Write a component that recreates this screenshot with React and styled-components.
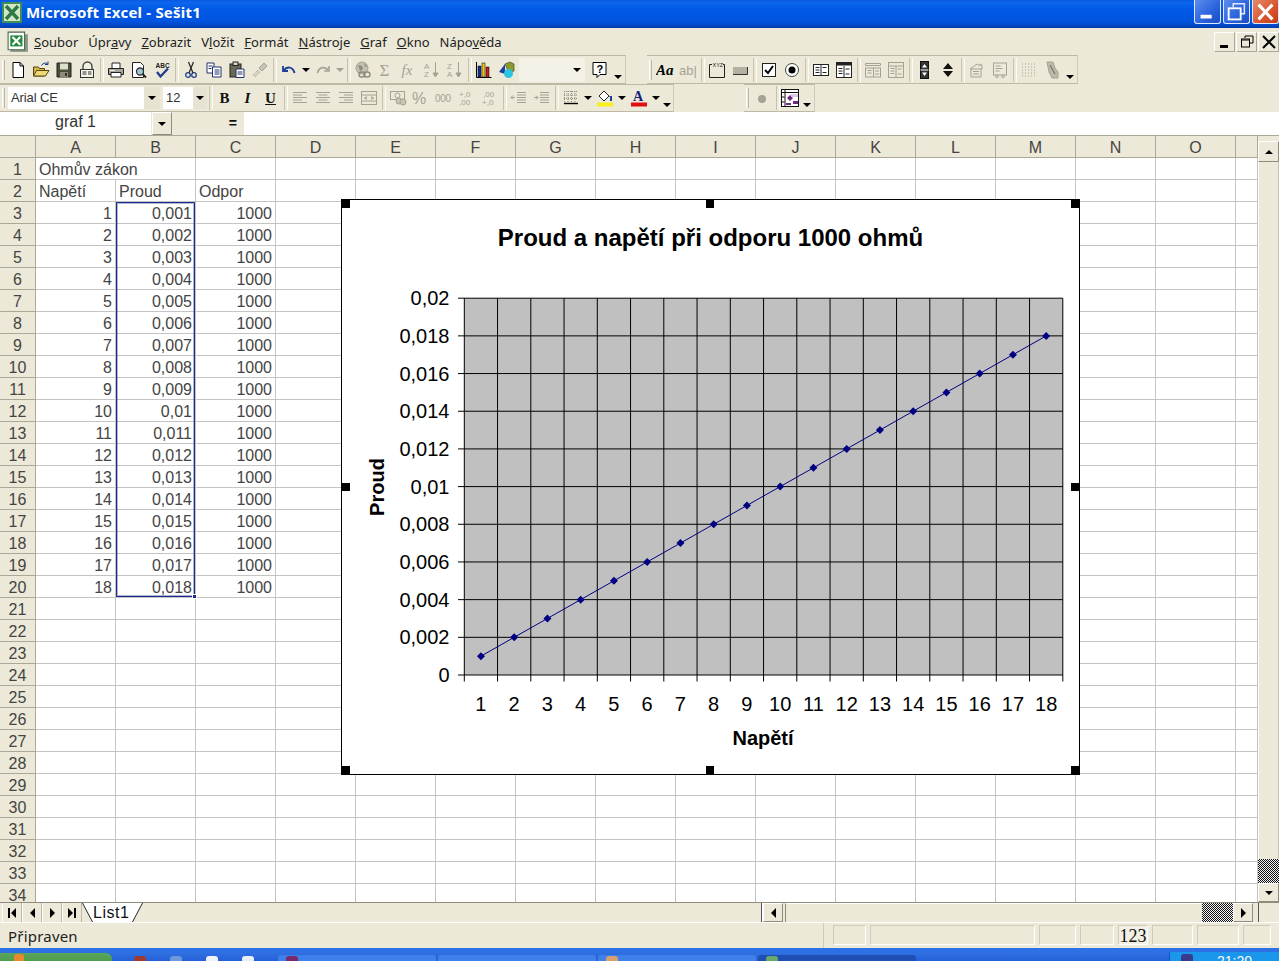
import React from 'react';
import styled, { createGlobalStyle } from 'styled-components';

const GlobalStyle = createGlobalStyle`
  html, body {
    margin: 0;
    padding: 0;
    background: #ece9d8;
    overflow: hidden;
  }
  * {
    box-sizing: border-box;
  }
`;

const FACE = '#ece9d8';
const EDGE = '#aca899';
const OFF = '#a5a293';
const CHECKER = 'repeating-conic-gradient(#111 0 25%, #f4f4f4 0 50%) 0 0 / 2px 2px';

const Glyph = ({ children }) => (
  <svg width="18" height="18" viewBox="0 0 18 18">
    {children}
  </svg>
);

// toolbar pictures, drawn by hand on an 18px square
const ICONS = {
  new: (
    <Glyph>
      <path d="M4 1.5h7l3.5 3.5v11.5H4z" fill="#fff" stroke="#000" />
      <path d="M11 1.5V5h3.5" fill="none" stroke="#000" />
    </Glyph>
  ),
  open: (
    <Glyph>
      <path d="M1.5 15V6h5l1 1.5h5V15z" fill="#d8b648" stroke="#54460f" />
      <path d="M1.5 15l3-5.5h12.5L13.5 15z" fill="#f0d878" stroke="#54460f" />
      <path d="M9.5 4.5C11 2 13 1.5 15.5 2.5M16 .5v3h-3" fill="none" stroke="#1a3a8a" />
    </Glyph>
  ),
  save: (
    <Glyph>
      <path d="M2 2h14v14H2z" fill="#4a4d38" stroke="#222" />
      <rect x="5" y="2.5" width="8" height="6" fill="#dedecc" />
      <rect x="5" y="11" width="8" height="5" fill="#8c8c74" />
      <rect x="10" y="12" width="2" height="3" fill="#333" />
    </Glyph>
  ),
  perm: (
    <Glyph>
      <path d="M5 9V5.5a4.5 4.5 0 019 0V9" fill="#f0efe4" stroke="#444" strokeWidth="1.4" />
      <rect x="2.5" y="8.5" width="13" height="8" fill="#f6f5ea" stroke="#333" />
      <path d="M4.5 11h4M4.5 13h4M10 11h3.5M10 13h3.5" stroke="#333" />
    </Glyph>
  ),
  print: (
    <Glyph>
      <path d="M5 7V2h8v5" fill="#fff" stroke="#222" />
      <path d="M1.5 7.5h15v6h-15z" fill="#a6a69c" stroke="#222" />
      <path d="M4 11.5h10v4.5H4z" fill="#fff" stroke="#222" />
      <path d="M3 9.5h5" stroke="#eee" />
    </Glyph>
  ),
  preview: (
    <Glyph>
      <path d="M2.5 1.5h8l3 3v12h-11z" fill="#fff" stroke="#222" />
      <circle cx="10" cy="10.5" r="3.5" fill="#9cc8d8" stroke="#333" strokeWidth="1.3" />
      <path d="M12.5 13l3.5 3.5" stroke="#222" strokeWidth="2" />
    </Glyph>
  ),
  spell: (
    <Glyph>
      <text x="2.5" y="6.5" fontFamily="Liberation Sans" fontSize="6.5" fontWeight="700" fill="#222">
        ABC
      </text>
      <path d="M4 11l3.5 4.5L15 7.5" fill="none" stroke="#24408e" strokeWidth="2.4" />
    </Glyph>
  ),
  cut: (
    <Glyph>
      <circle cx="6" cy="14" r="2.3" fill="none" stroke="#24408e" strokeWidth="1.3" />
      <circle cx="12" cy="14" r="2.3" fill="none" stroke="#24408e" strokeWidth="1.3" />
      <path d="M7 12L11.5 1M11 12L6.5 1" stroke="#222" strokeWidth="1.2" />
    </Glyph>
  ),
  copy: (
    <Glyph>
      <path d="M2 2h7v10H2z" fill="#fff" stroke="#24306e" />
      <path d="M7.5 6h8.5v10H7.5z" fill="#fff" stroke="#24306e" />
      <path d="M3.5 5h4M3.5 7.5h3M9.5 9h5M9.5 11h5M9.5 13h5" stroke="#24306e" />
    </Glyph>
  ),
  paste: (
    <Glyph>
      <rect x="2" y="3" width="11" height="13" fill="#6a6a52" stroke="#222" />
      <rect x="5" y="1" width="5" height="3.5" fill="#d8d8c8" stroke="#222" />
      <path d="M8 8h8v8.5H8z" fill="#fff" stroke="#24306e" />
      <path d="M9.5 11h5M9.5 13h5" stroke="#24306e" />
    </Glyph>
  ),
  painter: (
    <Glyph>
      <path d="M8 7l5-5 3 3-5 5z" fill="#c8c5b4" stroke={OFF} />
      <path d="M9 11L4 16 2 14l5-5z" fill="#d6d3c2" stroke={OFF} strokeDasharray="1 1" />
    </Glyph>
  ),
  undo: (
    <Glyph>
      <path d="M3 5v5h5" fill="none" stroke="#1d3f9a" strokeWidth="1.8" />
      <path d="M3.5 9.5C7 5 13 5.5 14.5 12" fill="none" stroke="#1d3f9a" strokeWidth="2" />
    </Glyph>
  ),
  redo: (
    <Glyph>
      <path d="M15 5v5h-5" fill="none" stroke={OFF} strokeWidth="1.6" />
      <path d="M14.5 9.5C11 5 5 5.5 3.5 12" fill="none" stroke={OFF} strokeWidth="1.8" />
    </Glyph>
  ),
  link: (
    <Glyph>
      <circle cx="8" cy="7" r="6" fill="#c4c1b0" stroke={OFF} />
      <path d="M4 4l4 1 1 3-3 2zM10 2l3 3-2 1z" fill="#8e8b7c" />
      <rect x="5" y="11" width="6" height="5" rx="2.5" fill="none" stroke="#8e8b7c" strokeWidth="1.4" />
      <rect x="10" y="11" width="6" height="5" rx="2.5" fill="none" stroke="#8e8b7c" strokeWidth="1.4" />
    </Glyph>
  ),
  sum: (
    <Glyph>
      <text x="2.5" y="15" fontFamily="Liberation Serif" fontSize="17" fill={OFF}>
        Σ
      </text>
    </Glyph>
  ),
  fx: (
    <Glyph>
      <text x="1.5" y="14" fontFamily="Liberation Serif" fontStyle="italic" fontSize="15" fill={OFF}>
        fx
      </text>
    </Glyph>
  ),
  az: (
    <Glyph>
      <text x="1" y="8" fontFamily="Liberation Sans" fontSize="8" fill={OFF}>
        A
      </text>
      <text x="1" y="16" fontFamily="Liberation Sans" fontSize="8" fill={OFF}>
        Z
      </text>
      <path d="M12.5 1v13M10 12l2.5 4 2.5-4z" fill={OFF} stroke={OFF} />
    </Glyph>
  ),
  za: (
    <Glyph>
      <text x="1" y="8" fontFamily="Liberation Sans" fontSize="8" fill={OFF}>
        Z
      </text>
      <text x="1" y="16" fontFamily="Liberation Sans" fontSize="8" fill={OFF}>
        A
      </text>
      <path d="M12.5 1v13M10 12l2.5 4 2.5-4z" fill={OFF} stroke={OFF} />
    </Glyph>
  ),
  chart: (
    <Glyph>
      <path d="M1.5 1v15.5h15" fill="none" stroke="#000" />
      <rect x="3" y="5" width="3" height="11" fill="#1d2f8a" stroke="#000" strokeWidth=".5" />
      <rect x="7" y="2" width="3" height="14" fill="#e8c820" stroke="#000" strokeWidth=".5" />
      <rect x="11" y="6" width="3" height="10" fill="#c81c1c" stroke="#000" strokeWidth=".5" />
    </Glyph>
  ),
  draw: (
    <Glyph>
      <path d="M7 3l5-2 4 2v7l-5 2z" fill="#8c9a28" stroke="#333" strokeWidth=".6" />
      <path d="M1 11l6-8v10z" fill="#1d3f9a" />
      <circle cx="10.5" cy="12.5" r="4.5" fill="#2ac4e0" />
    </Glyph>
  ),
  help: (
    <Glyph>
      <path d="M2 1.5h13v12H9l-3 3v-3H2z" fill="#fff" stroke="#000" />
      <text x="5.5" y="11.5" fontFamily="Liberation Sans" fontSize="11" fontWeight="700" fill="#000">
        ?
      </text>
    </Glyph>
  ),
  aa: (
    <Glyph>
      <text x="0" y="14" fontFamily="Liberation Serif" fontStyle="italic" fontWeight="700" fontSize="15" fill="#000">
        Aa
      </text>
    </Glyph>
  ),
  ab: (
    <Glyph>
      <text x="0" y="14" fontFamily="Liberation Sans" fontSize="13" fill={OFF}>
        ab|
      </text>
    </Glyph>
  ),
  group: (
    <Glyph>
      <path d="M4 3.5H1.5v13h15v-13H15" fill="none" stroke="#222" />
      <text x="4.5" y="6" fontFamily="Liberation Sans" fontSize="5.5" fill="#222">
        XYZ
      </text>
    </Glyph>
  ),
  button: (
    <Glyph>
      <rect x="2" y="6" width="14" height="7" fill="#b4b1a2" />
      <path d="M2 13.5h14.5V6" fill="none" stroke="#333" />
    </Glyph>
  ),
  check: (
    <Glyph>
      <rect x="2.5" y="2.5" width="13" height="13" fill="#fff" stroke="#222" />
      <path d="M5 9l3 3 5-7" fill="none" stroke="#000" strokeWidth="2" />
    </Glyph>
  ),
  radio: (
    <Glyph>
      <circle cx="9" cy="9" r="6.5" fill="#fff" stroke="#444" />
      <circle cx="9" cy="9" r="3.5" fill="#000" />
    </Glyph>
  ),
  list: (
    <Glyph>
      <rect x="1.5" y="3.5" width="15" height="11" fill="#fff" stroke="#222" />
      <path d="M3.5 6.5h4M3.5 9h4M3.5 11.5h4M9 3.5v11M10.5 6.5h4M10.5 11.5h4" stroke="#222" />
    </Glyph>
  ),
  combo: (
    <Glyph>
      <rect x="1.5" y="1.5" width="15" height="15" fill="#fff" stroke="#222" />
      <rect x="1.5" y="1.5" width="15" height="3" fill="#222" />
      <path d="M3.5 7.5h4M3.5 10h4M3.5 12.5h4M9 5v11M10.5 8h4M10.5 13h4" stroke="#222" />
    </Glyph>
  ),
  listOff: (
    <Glyph>
      <path d="M1.5 2.5h15v2h-15z" fill="none" stroke={OFF} />
      <rect x="1.5" y="7" width="15" height="9" fill="none" stroke={OFF} />
      <path d="M3.5 9.5h4M3.5 12h4M9.5 7v9M11 10h4M11 13h4" stroke={OFF} />
    </Glyph>
  ),
  comboOff: (
    <Glyph>
      <rect x="1.5" y="1.5" width="15" height="15" fill="none" stroke={OFF} />
      <path d="M1.5 5h15M3.5 7.5h4M3.5 10h4M3.5 12.5h4M9 5v11M10.5 8h4M10.5 13h4" stroke={OFF} />
    </Glyph>
  ),
  spin: (
    <Glyph>
      <rect x="4.5" y=".5" width="8" height="17" fill="#333" stroke="#111" />
      <path d="M8.5 3L6 6.5h5zM8.5 15L6 11.5h5z" fill="#fff" />
      <path d="M4.5 9h8" stroke="#fff" />
    </Glyph>
  ),
  scroll: (
    <Glyph>
      <path d="M9 2L4 8h10zM9 16l-5-6h10z" fill="#111" />
    </Glyph>
  ),
  props: (
    <Glyph>
      <path d="M2 8l7-5 3 2V3l2 1v4H2zM3 8v8h10V8" fill="none" stroke={OFF} />
      <path d="M5 10.5h6M5 13h6" stroke={OFF} />
    </Glyph>
  ),
  code: (
    <Glyph>
      <rect x="2.5" y="2" width="13" height="12" fill="none" stroke={OFF} />
      <path d="M4.5 5h5M4.5 7.5h7M4.5 10h4" stroke={OFF} />
      <circle cx="6" cy="15.5" r="1.3" fill="none" stroke={OFF} />
      <circle cx="12" cy="15.5" r="1.3" fill="none" stroke={OFF} />
    </Glyph>
  ),
  dots: (
    <Glyph>
      <path d="M2 3h14M2 6h14M2 9h14M2 12h14M2 15h14" stroke={OFF} strokeDasharray="1 2" />
    </Glyph>
  ),
  pin: (
    <Glyph>
      <path d="M4 1h6l2 6 3 4v6H9l-3-6z" fill="#bdbaa9" stroke={OFF} />
      <path d="M7 4l5 9" stroke="#7d7a6c" strokeWidth="1.4" />
    </Glyph>
  ),
  alignLeft: (
    <Glyph>
      <path d="M2 3.5h14M2 6h9M2 8.5h14M2 11h9M2 13.5h14" stroke={OFF} />
    </Glyph>
  ),
  alignCenter: (
    <Glyph>
      <path d="M2 3.5h14M4.5 6h9M2 8.5h14M4.5 11h9M2 13.5h14" stroke={OFF} />
    </Glyph>
  ),
  alignRight: (
    <Glyph>
      <path d="M2 3.5h14M7 6h9M2 8.5h14M7 11h9M2 13.5h14" stroke={OFF} />
    </Glyph>
  ),
  merge: (
    <Glyph>
      <rect x="1.5" y="2.5" width="15" height="13" fill="none" stroke={OFF} />
      <path d="M1.5 6h15M1.5 12h15M4 9h3M11 9h3M7 7.5L5 9l2 1.5M11 7.5l2 1.5-2 1.5" fill="none" stroke={OFF} />
    </Glyph>
  ),
  money: (
    <Glyph>
      <rect x="1.5" y="2.5" width="14" height="8" fill="none" stroke={OFF} />
      <circle cx="8.5" cy="6.5" r="2.5" fill="none" stroke={OFF} />
      <circle cx="10" cy="12" r="3" fill="#c9c6b5" stroke={OFF} />
      <circle cx="14" cy="13" r="3" fill="#c9c6b5" stroke={OFF} />
    </Glyph>
  ),
  percent: (
    <Glyph>
      <text x="0" y="15" fontFamily="Liberation Sans" fontSize="16" fill={OFF}>
        %
      </text>
    </Glyph>
  ),
  thousand: (
    <Glyph>
      <text x="0" y="13" fontFamily="Liberation Sans" fontSize="10" fill={OFF} letterSpacing="-.3">
        000
      </text>
    </Glyph>
  ),
  decMore: (
    <Glyph>
      <text x="1" y="8" fontFamily="Liberation Sans" fontSize="8" fill={OFF}>
        +,0
      </text>
      <text x="1" y="16" fontFamily="Liberation Sans" fontSize="8" fill={OFF}>
        ,00
      </text>
    </Glyph>
  ),
  decLess: (
    <Glyph>
      <text x="2" y="8" fontFamily="Liberation Sans" fontSize="8" fill={OFF}>
        ,00
      </text>
      <text x="1" y="16" fontFamily="Liberation Sans" fontSize="8" fill={OFF}>
        +,0
      </text>
    </Glyph>
  ),
  outdent: (
    <Glyph>
      <path d="M7 3.5h9M7 6h9M7 8.5h9M7 11h9M7 13.5h9M1 8.5h4M3 6.5l-2 2 2 2" fill="none" stroke={OFF} />
    </Glyph>
  ),
  indent: (
    <Glyph>
      <path d="M7 3.5h9M7 6h9M7 8.5h9M7 11h9M7 13.5h9M1 8.5h4M3 6.5l2 2-2 2" fill="none" stroke={OFF} />
    </Glyph>
  ),
  borders: (
    <Glyph>
      <path d="M2 2.5h14M2 6h14M2 9.5h14M2.5 2v11M6 2v11M9.5 2v11M13 2v11" stroke="#8e8b7c" strokeDasharray="1 1" />
      <path d="M2 14.5h14" stroke="#000" strokeWidth="1.4" />
    </Glyph>
  ),
  fill: (
    <Glyph>
      <path d="M3 7l5-5 5 5-5 5z" fill="#fff" stroke="#222" />
      <path d="M8 2l5 5h3v5h-2V8" fill="#1d3f9a" />
      <rect x="1" y="13.5" width="16" height="4" fill="#f7f01a" />
    </Glyph>
  ),
  color: (
    <Glyph>
      <text x="3" y="12" fontFamily="Liberation Serif" fontWeight="700" fontSize="14" fill="#10207a">
        A
      </text>
      <rect x="1" y="13.5" width="16" height="4" fill="#e01010" />
    </Glyph>
  ),
  dot: (
    <Glyph>
      <circle cx="9" cy="10" r="4" fill="#a5a293" />
    </Glyph>
  ),
  table: (
    <Glyph>
      <rect x=".5" y=".5" width="17" height="17" fill="#fff" stroke="#111" />
      <path d="M.5 3.5h17M4 .5v17M.5 8h3M.5 13h3" stroke="#111" />
      <path d="M6 9l3-3 3 3-3 3zM12 12h5v3h-5zM5 14h5v2H5z" fill="#6a2a80" />
      <rect x="10" y="5" width="7" height="3" fill="#dcc8e8" />
    </Glyph>
  ),
};

const MAIN_TOOLS = [
  'new', 'open', 'save', 'perm', '|', 'print', 'preview', 'spell', '|', 'cut', 'copy', 'paste', 'painter', '|',
  'undo', 'v', 'redo', 'vOff', '|', 'link', 'sum', 'fx', 'az', 'za', '|', 'chart', 'draw',
];
const FORMS_TOOLS = [
  'aa', 'ab', '|', 'group', 'button', '|', 'check', 'radio', '|', 'list', 'combo', '|', 'listOff', 'comboOff', '|',
  'spin', 'scroll', '|', 'props', 'code', '|', 'dots', 'pin',
];
const FORMAT_TOOLS = [
  '|', 'B', 'I', 'U', '|', 'alignLeft', 'alignCenter', 'alignRight', 'merge', '|', 'money', 'percent', 'thousand',
  'decMore', 'decLess', '|', 'outdent', 'indent', '|', 'borders', 'v', 'fill', 'v', 'color', 'v',
];

const COLUMNS = 'ABCDEFGHIJKLMNO'.split('');
const ROW_COUNT = 34;

const sheetCell = (row, col) => {
  if (row === 1 && col === 0) return { text: 'Ohmův zákon' };
  if (row === 2) return { text: ['Napětí', 'Proud', 'Odpor'][col] };
  if (row >= 3 && row <= 20) {
    if (col === 0) return { text: row - 2, right: true };
    if (col === 1) {
      const value = String((row - 2) / 1000).replace('.', ',');
      return { text: value, right: true };
    }
    if (col === 2) return { text: 1000, right: true };
  }
  return { text: '' };
};

const PLOT = { left: 464.3, right: 1062.8, top: 298.2, bottom: 675 };
const STEP_X = (PLOT.right - PLOT.left) / 18;
const STEP_Y = (PLOT.bottom - PLOT.top) / 10;
const Y_LABELS = ['0', '0,002', '0,004', '0,006', '0,008', '0,01', '0,012', '0,014', '0,016', '0,018', '0,02'];
const POINTS = Array.from({ length: 18 }, (_, i) => ({
  x: PLOT.left + STEP_X * (i + 0.5),
  y: PLOT.bottom - STEP_Y * (i + 1) * 0.5,
}));

function ChartDrawing() {
  return (
    <svg width="737" height="574" viewBox="342 200 737 574">
      <text x="710.5" y="246" textAnchor="middle" fontFamily="Liberation Sans" fontWeight="700" fontSize="24" fill="#000">
        Proud a napětí při odporu 1000 ohmů
      </text>
      <rect x={PLOT.left} y={PLOT.top} width={PLOT.right - PLOT.left} height={PLOT.bottom - PLOT.top} fill="#c0c0c0" />
      {Y_LABELS.map((label, i) => {
        const y = PLOT.bottom - STEP_Y * i;
        return (
          <g key={label}>
            <line x1="458" x2={PLOT.right} y1={y} y2={y} stroke="#000" />
            <text x="449.5" y={y + 7} textAnchor="end" fontFamily="Liberation Sans" fontSize="20" fill="#000">
              {label}
            </text>
          </g>
        );
      })}
      {Array.from({ length: 19 }, (_, i) => {
        const x = PLOT.left + STEP_X * i;
        return <line key={i} x1={x} x2={x} y1={PLOT.top} y2="681.5" stroke="#000" />;
      })}
      {POINTS.map((p, i) => (
        <text key={i} x={p.x} y="711" textAnchor="middle" fontFamily="Liberation Sans" fontSize="20" fill="#000">
          {i + 1}
        </text>
      ))}
      <polyline points={POINTS.map((p) => `${p.x},${p.y}`).join(' ')} fill="none" stroke="#000080" />
      {POINTS.map((p, i) => (
        <path key={i} d={`M${p.x - 4} ${p.y}L${p.x} ${p.y - 4}L${p.x + 4} ${p.y}L${p.x} ${p.y + 4}z`} fill="#000080" />
      ))}
      <text x="763" y="745" textAnchor="middle" fontFamily="Liberation Sans" fontWeight="700" fontSize="20" fill="#000">
        Napětí
      </text>
      <text
        x="384"
        y="487"
        transform="rotate(-90 384 487)"
        textAnchor="middle"
        fontFamily="Liberation Sans"
        fontWeight="700"
        fontSize="20"
        fill="#000"
      >
        Proud
      </text>
    </svg>
  );
}

function ToolItem({ id }) {
  if (id === '|') return <Sep />;
  if (id === 'v') return <Drop $w={11}><DownArrow /></Drop>;
  if (id === 'vOff') return <Drop $w={11}><DownArrow $off /></Drop>;
  if (id === 'B') return <Tool><Letter>B</Letter></Tool>;
  if (id === 'I') return <Tool><Letter $italic>I</Letter></Tool>;
  if (id === 'U') return <Tool><Letter $under>U</Letter></Tool>;
  return <Tool>{ICONS[id]}</Tool>;
}

function ExcelIcon({ size }) {
  return (
    <svg width={size} height={size} viewBox="0 0 20 20">
      <rect x="3" y="3" width="16" height="16" fill="#8a9a88" />
      <path d="M1 1h15v16H1z" fill="#fff" stroke="#4c6a4c" />
      <rect x="3" y="4" width="11" height="10" fill="#1f8a3a" />
      <path d="M5 5.5l7 7M12 5.5l-7 7" stroke="#fff" strokeWidth="2" />
    </svg>
  );
}

export default function App() {
  return (
    <>
      <GlobalStyle />
      <Screen>
        <TitleBar>
          <TitleIcon>
            <svg width="20" height="21" viewBox="0 0 20 21">
              <rect width="20" height="21" fill="#3f8f55" />
              <rect x="2" y="2" width="16" height="17" fill="#d4e6c8" />
              <path d="M4 4l12 13M16 4L4 17" stroke="#2f7a44" strokeWidth="3.4" />
            </svg>
          </TitleIcon>
          <TitleText>Microsoft Excel - Sešit1</TitleText>
          <WinButtons>
            <WinButton>
              <svg width="27" height="24" viewBox="0 0 27 24">
                <rect x="6" y="15" width="12" height="4" fill="#fff" />
              </svg>
            </WinButton>
            <WinButton>
              <svg width="27" height="24" viewBox="0 0 27 24">
                <path d="M10 7V3h12v11h-4" fill="none" stroke="#dfe9fb" strokeWidth="1.6" />
                <rect x="5" y="8" width="13" height="12" fill="none" stroke="#fff" strokeWidth="2" />
              </svg>
            </WinButton>
            <WinButton $close>
              <svg width="27" height="24" viewBox="0 0 27 24">
                <path d="M6 4l15 16M21 4L6 20" stroke="#fff" strokeWidth="3.4" />
              </svg>
            </WinButton>
          </WinButtons>
        </TitleBar>

        <MenuBar>
          <MenuIcon><ExcelIcon size={22} /></MenuIcon>
          <MenuItem><u>S</u>oubor</MenuItem>
          <MenuItem>Úpr<u>a</u>vy</MenuItem>
          <MenuItem><u>Z</u>obrazit</MenuItem>
          <MenuItem>V<u>l</u>ožit</MenuItem>
          <MenuItem><u>F</u>ormát</MenuItem>
          <MenuItem><u>N</u>ástroje</MenuItem>
          <MenuItem><u>G</u>raf</MenuItem>
          <MenuItem><u>O</u>kno</MenuItem>
          <MenuItem>Nápo<u>v</u>ěda</MenuItem>
          <DocButtons>
            <DocButton>
              <svg width="14" height="14" viewBox="0 0 14 14"><rect x="2" y="10" width="8" height="3" fill="#000" /></svg>
            </DocButton>
            <DocButton>
              <svg width="14" height="14" viewBox="0 0 14 14">
                <path d="M5 3V1h8v7h-3" fill="none" stroke="#000" />
                <rect x="1.5" y="4" width="8" height="8" fill="none" stroke="#000" />
                <path d="M1.5 5h8" stroke="#000" />
              </svg>
            </DocButton>
            <DocButton>
              <svg width="16" height="14" viewBox="0 0 16 14"><path d="M2 1l12 12M14 1L2 13" stroke="#000" strokeWidth="2" /></svg>
            </DocButton>
          </DocButtons>
        </MenuBar>

        <ToolRow>
          <Toolbar>
            <Gripper />
            {MAIN_TOOLS.map((id, i) => <ToolItem key={i} id={id} />)}
            <ZoomBox><DownArrow /></ZoomBox>
            <Tool>{ICONS.help}</Tool>
            <More $w={14}><DownArrow /></More>
          </Toolbar>
          <Toolbar $gap={21}>
            <Gripper />
            {FORMS_TOOLS.map((id, i) => <ToolItem key={i} id={id} />)}
            <More $w={14}><DownArrow /></More>
          </Toolbar>
        </ToolRow>

        <ToolRow $second>
          <Toolbar>
            <Gripper />
            <Combo $w={152} $gap={2}>
              <ComboText>Arial CE</ComboText>
              <ComboArrow $w={16}><DownArrow /></ComboArrow>
            </Combo>
            <Combo $w={44} $gap={3}>
              <ComboText>12</ComboText>
              <ComboArrow $w={14}><DownArrow /></ComboArrow>
            </Combo>
            {FORMAT_TOOLS.map((id, i) => <ToolItem key={i} id={id} />)}
            <More $w={12}><DownArrow /></More>
          </Toolbar>
          <Toolbar $gap={70}>
            <Gripper />
            <Tool $w={24}>{ICONS.dot}</Tool>
            <Sep />
            <Tool $w={19}>{ICONS.table}</Tool>
            <More $w={15}><DownArrow /></More>
          </Toolbar>
        </ToolRow>

        <FormulaBar>
          <NameBox>graf 1</NameBox>
          <NameArrow><DownArrow /></NameArrow>
          <FormulaTools>=</FormulaTools>
          <FormulaInput />
        </FormulaBar>

        <Sheet>
          <GridArea>
            <Grid>
              <Corner />
              {COLUMNS.map((c) => <ColHead key={c}>{c}</ColHead>)}
              <ColHead />
              {Array.from({ length: ROW_COUNT }, (_, r) => (
                <React.Fragment key={r}>
                  <RowHead>{r + 1}</RowHead>
                  {COLUMNS.map((c, col) => {
                    const cell = sheetCell(r + 1, col);
                    return (
                      <Cell key={c} $right={cell.right} $open={r === 0 && col === 0}>
                        {cell.text}
                      </Cell>
                    );
                  })}
                  <Cell />
                </React.Fragment>
              ))}
            </Grid>
            <Selection>
              <SelectionHandle />
            </Selection>
            <ChartFrame>
              <ChartDrawing />
              <Handle $x="left" $y="top" />
              <Handle $x="center" $y="top" />
              <Handle $x="right" $y="top" />
              <Handle $x="left" $y="middle" />
              <Handle $x="right" $y="middle" />
              <Handle $x="left" $y="bottom" />
              <Handle $x="center" $y="bottom" />
              <Handle $x="right" $y="bottom" />
            </ChartFrame>
          </GridArea>
          <VScroll>
            <ScrollButton $h={21}><UpArrow /></ScrollButton>
            <VThumb />
            <VChecker />
            <ScrollButton $h={19}><DownArrow /></ScrollButton>
          </VScroll>
        </Sheet>

        <TabBar>
          <NavButton><BarMark /><LeftArrow /></NavButton>
          <NavButton><LeftArrow /></NavButton>
          <NavButton><RightArrow /></NavButton>
          <NavButton><RightArrow /><BarMark /></NavButton>
          <SheetTab><TabLabel>List1</TabLabel></SheetTab>
          <HScroll>
            <Splitter />
            <HButton><LeftArrow /></HButton>
            <HThumb />
            <HChecker />
            <HButton><RightArrow /></HButton>
            <HEnd />
          </HScroll>
        </TabBar>

        <StatusBar>
          <StatusText>Připraven</StatusText>
          <StatusPanels>
            <StatusPanel $w={33} />
            <StatusPanel $w={165} />
            <StatusPanel $w={37} />
            <StatusPanel $w={34} />
            <NumPanel>123</NumPanel>
            <StatusPanel $w={41} />
            <StatusPanel $w={42} />
            <StatusPanel $w={28} />
          </StatusPanels>
        </StatusBar>

        <Taskbar>
          <StartButton><StartFlag /></StartButton>
          <QuickLaunch>
            <QuickIcon $c="#a03a30" />
            <QuickIcon $c="#6f9ad8" />
            <QuickIcon $c="#f0f4fa" />
            <QuickIcon $c="#e8eef8" />
          </QuickLaunch>
          <TaskButton><QuickIcon $c="#7a2a6a" /></TaskButton>
          <TaskButton />
          <TaskButton><QuickIcon $c="#d8a070" /></TaskButton>
          <TaskButton $active><QuickIcon $c="#6aa86a" /></TaskButton>
          <Tray>
            <QuickIcon $c="#3a3a8a" />
            <Clock>21:20</Clock>
          </Tray>
        </Taskbar>
      </Screen>
    </>
  );
}

const Screen = styled.div`
  width: 1279px;
  height: 961px;
  overflow: hidden;
  display: flex;
  flex-direction: column;
  background: ${FACE};
  font-family: 'Liberation Sans', Arial, sans-serif;
`;

const TitleBar = styled.div`
  height: 28px;
  flex: none;
  display: flex;
  align-items: flex-start;
  background: linear-gradient(180deg, #0a5ae0 0%, #0c66ee 10%, #0058e4 35%, #0054e0 75%, #0048c8 90%, #003aa8 100%);
`;

const TitleIcon = styled.div`
  width: 26px;
  padding: 2px 0 0 2px;
  line-height: 0;
`;

const TitleText = styled.div`
  font-family: 'Noto Sans', sans-serif;
  font-weight: 700;
  font-size: 15px;
  letter-spacing: 0.2px;
  line-height: 24px;
  color: #fff;
  white-space: nowrap;
`;

const WinButtons = styled.div`
  margin-left: auto;
  display: flex;
  gap: 2px;
`;

const WinButton = styled.div`
  width: 27px;
  height: 24px;
  line-height: 0;
  border: 1px solid #dfe9fb;
  border-top: none;
  border-radius: 0 0 3px 3px;
  background: ${(p) =>
    p.$close
      ? 'linear-gradient(135deg, #e48a6a 0%, #d9542c 60%, #c23c18 100%)'
      : 'linear-gradient(135deg, #5c8cee 0%, #2a62dc 60%, #1c4cc4 100%)'};
  display: flex;
  align-items: center;
  justify-content: center;
`;

const MenuBar = styled.div`
  height: 27px;
  flex: none;
  display: flex;
  align-items: center;
  padding-left: 7px;
  background: ${FACE};
`;

const MenuIcon = styled.div`
  width: 22px;
  line-height: 0;
`;

const MenuItem = styled.div`
  font-family: 'Noto Sans', sans-serif;
  font-size: 13px;
  color: #222;
  padding: 0 5px;
  white-space: nowrap;
`;

const DocButtons = styled.div`
  margin-left: auto;
  display: flex;
  gap: 1px;
`;

const DocButton = styled.div`
  width: 21px;
  height: 20px;
  background: ${FACE};
  border: 1px solid;
  border-color: #fff ${EDGE} ${EDGE} #fff;
  display: flex;
  align-items: center;
  justify-content: center;
  line-height: 0;
`;

const ToolRow = styled.div`
  height: ${(p) => (p.$second ? 28 : 29)}px;
  flex: none;
  display: flex;
  background: ${FACE};
`;

const Toolbar = styled.div`
  height: 100%;
  display: flex;
  align-items: center;
  margin-left: ${(p) => p.$gap || 0}px;
  border-bottom: 1px solid #bdb9a6;
  border-right: 1px solid #cfcbb8;
  border-top: 1px solid #bdb9a6;
`;

const Gripper = styled.div`
  width: 3px;
  height: 20px;
  margin: 0 1px 0 2px;
  border-left: 1px solid #fff;
  border-right: 1px solid #bdb9a6;
`;

const Sep = styled.div`
  width: 6px;
  height: 24px;
  flex: none;
  position: relative;
  &::after {
    content: '';
    position: absolute;
    left: 2px;
    top: 0;
    bottom: 0;
    width: 2px;
    border-left: 1px solid #c6c2ae;
    border-right: 1px solid #fbfaf4;
  }
`;

const Tool = styled.div`
  width: ${(p) => p.$w || 23}px;
  height: 22px;
  flex: none;
  display: flex;
  align-items: center;
  justify-content: center;
  line-height: 0;
`;

const Drop = styled.div`
  width: ${(p) => p.$w}px;
  height: 22px;
  flex: none;
  display: flex;
  align-items: center;
  justify-content: center;
`;

const More = styled(Drop)`
  align-items: flex-end;
  padding-bottom: 2px;
`;

const DownArrow = styled.span`
  display: block;
  width: 0;
  height: 0;
  border-left: 4px solid transparent;
  border-right: 4px solid transparent;
  border-top: 4px solid ${(p) => (p.$off ? OFF : '#000')};
`;

const UpArrow = styled(DownArrow)`
  border-top: none;
  border-bottom: 4px solid #000;
`;

const LeftArrow = styled.span`
  display: block;
  width: 0;
  height: 0;
  border-top: 5px solid transparent;
  border-bottom: 5px solid transparent;
  border-right: 5px solid #000;
`;

const RightArrow = styled(LeftArrow)`
  border-right: none;
  border-left: 5px solid #000;
`;

const BarMark = styled.span`
  display: block;
  width: 2px;
  height: 10px;
  background: #000;
`;

const Letter = styled.span`
  font-family: 'Liberation Serif', serif;
  font-weight: 700;
  font-size: 15px;
  font-style: ${(p) => (p.$italic ? 'italic' : 'normal')};
  text-decoration: ${(p) => (p.$under ? 'underline' : 'none')};
  color: #111;
`;

const ZoomBox = styled.div`
  width: 66px;
  height: 24px;
  margin: 0 3px 0 1px;
  flex: none;
  display: flex;
  align-items: center;
  justify-content: flex-end;
  padding-right: 4px;
  background: #f4f2e6;
`;

const Combo = styled.div`
  width: ${(p) => p.$w}px;
  height: 22px;
  margin-left: ${(p) => p.$gap || 0}px;
  flex: none;
  display: flex;
  background: #fff;
`;

const ComboText = styled.div`
  flex: 1;
  font-size: 13px;
  line-height: 21px;
  padding-left: 3px;
  color: #333;
  letter-spacing: -0.1px;
`;

const ComboArrow = styled.div`
  width: ${(p) => p.$w}px;
  background: #e6e3d3;
  display: flex;
  align-items: center;
  justify-content: center;
`;

const FormulaBar = styled.div`
  height: 23px;
  flex: none;
  display: flex;
  background: ${FACE};
`;

const NameBox = styled.div`
  width: 151px;
  background: #fff;
  font-size: 16px;
  line-height: 20px;
  text-align: center;
  color: #333;
`;

const NameArrow = styled.div`
  width: 20px;
  margin-left: 1px;
  border: 1px solid;
  border-color: #fff #8f8c7d #8f8c7d #fff;
  display: flex;
  align-items: center;
  justify-content: center;
`;

const FormulaTools = styled.div`
  width: 72px;
  text-align: right;
  padding-right: 7px;
  font-weight: 700;
  font-size: 14px;
  line-height: 23px;
  color: #111;
`;

const FormulaInput = styled.div`
  flex: 1;
  background: #fff;
`;

const Sheet = styled.div`
  height: 767px;
  flex: none;
  display: flex;
  border-top: 1px solid ${EDGE};
  background: #fff;
`;

const GridArea = styled.div`
  position: relative;
  width: 1258px;
  height: 100%;
  overflow: hidden;
`;

const Grid = styled.div`
  display: grid;
  grid-template-columns: 36px repeat(15, 80px) 22px;
  grid-auto-rows: 22px;
  font-size: 16px;
  color: #444;
`;

const Corner = styled.div`
  background: ${FACE};
  border-right: 1px solid ${EDGE};
  border-bottom: 1px solid ${EDGE};
`;

const ColHead = styled(Corner)`
  text-align: center;
  line-height: 23px;
`;

const RowHead = styled(Corner)`
  text-align: center;
  line-height: 24px;
`;

const Cell = styled.div`
  border-bottom: 1px solid #c4c4c4;
  border-right: ${(p) => (p.$open ? 'none' : '1px solid #c4c4c4')};
  padding: 0 3px;
  line-height: 24px;
  white-space: nowrap;
  text-align: ${(p) => (p.$right ? 'right' : 'left')};
`;

const Selection = styled.div`
  position: absolute;
  left: 116px;
  top: 66px;
  width: 79px;
  height: 395px;
  border: 1px solid #1d2a8c;
  box-shadow: inset 0 0 0 1px rgba(29, 42, 140, 0.35);
`;

const SelectionHandle = styled.div`
  position: absolute;
  right: -3px;
  bottom: -3px;
  width: 5px;
  height: 5px;
  background: #1d2a8c;
  border: 1px solid #fff;
`;

const ChartFrame = styled.div`
  position: absolute;
  left: 341px;
  top: 63px;
  width: 739px;
  height: 576px;
  background: #fff;
  border: 1px solid #000;
  line-height: 0;
`;

const Handle = styled.div`
  position: absolute;
  width: 8px;
  height: 8px;
  background: #000;
  ${(p) => (p.$x === 'left' ? 'left: 0;' : p.$x === 'right' ? 'right: 0;' : 'left: 364px;')}
  ${(p) => (p.$y === 'top' ? 'top: 0;' : p.$y === 'bottom' ? 'bottom: 0;' : 'top: 283px;')}
`;

const VScroll = styled.div`
  width: 21px;
  height: 100%;
  padding-top: 5px;
  display: flex;
  flex-direction: column;
  background: ${FACE};
`;

const ScrollButton = styled.div`
  height: ${(p) => p.$h}px;
  flex: none;
  display: flex;
  align-items: center;
  justify-content: center;
  background: ${FACE};
  border: 1px solid;
  border-color: #fff #8f8c7d #8f8c7d #fff;
`;

const VThumb = styled.div`
  flex: 1;
  background: ${FACE};
  border-left: 1px solid #fff;
  border-right: 1px solid #c9c5b2;
`;

const VChecker = styled.div`
  height: 24px;
  flex: none;
  background: ${CHECKER};
`;

const TabBar = styled.div`
  height: 20px;
  flex: none;
  display: flex;
  align-items: stretch;
  padding-left: 2px;
  background: ${FACE};
  border-top: 1px solid #8f8c7d;
`;

const NavButton = styled.div`
  width: 20px;
  flex: none;
  display: flex;
  align-items: center;
  justify-content: center;
  gap: 1px;
  border-right: 1px solid #bdb9a6;
  border-left: 1px solid #fff;
`;

const SheetTab = styled.div`
  position: relative;
  margin-left: 11px;
  width: 39px;
  background: #fff;
  &::before,
  &::after {
    content: '';
    position: absolute;
    top: 0;
    bottom: 0;
    width: 11px;
    background: #fff;
  }
  &::before {
    left: -6px;
    border-left: 1px solid #222;
    transform: skewX(28deg);
  }
  &::after {
    right: -6px;
    border-right: 1px solid #222;
    transform: skewX(-28deg);
  }
`;

const TabLabel = styled.span`
  position: relative;
  z-index: 1;
  font-size: 16px;
  line-height: 19px;
  letter-spacing: 0.5px;
  color: #111;
`;

const HScroll = styled.div`
  margin-left: auto;
  width: 518px;
  display: flex;
  align-items: stretch;
`;

const Splitter = styled.div`
  width: 2px;
  border-left: 1px solid #555;
  background: #fff;
`;

const HButton = styled.div`
  width: 20px;
  flex: none;
  display: flex;
  align-items: center;
  justify-content: center;
  border: 1px solid;
  border-color: #fff #8f8c7d #8f8c7d #fff;
`;

const HThumb = styled.div`
  flex: 1;
  margin-left: 2px;
  border-left: 1px solid #8f8c7d;
  border-top: 1px solid #fff;
`;

const HChecker = styled.div`
  width: 31px;
  flex: none;
  background: ${CHECKER};
`;

const HEnd = styled.div`
  width: 21px;
  flex: none;
  margin-left: 5px;
  border-left: 1px solid #555;
`;

const StatusBar = styled.div`
  height: 26px;
  flex: none;
  display: flex;
  align-items: center;
  padding-left: 8px;
  border-top: 1px solid #fff;
  background: ${FACE};
`;

const StatusText = styled.div`
  font-family: 'Noto Sans', sans-serif;
  font-size: 15px;
  letter-spacing: 0.2px;
  color: #222;
`;

const StatusPanels = styled.div`
  margin-left: auto;
  height: 100%;
  width: 456px;
  padding: 2px 6px 0 9px;
  display: flex;
  gap: 4px;
  border-left: 1px solid #cfcbb8;
`;

const StatusPanel = styled.div`
  width: ${(p) => p.$w}px;
  height: 20px;
  flex: none;
  border: 1px solid;
  border-color: #cfcbb8 #fff #fff #cfcbb8;
`;

const NumPanel = styled(StatusPanel)`
  width: 30px;
  background: #f2f0e4;
  font-family: 'Liberation Serif', serif;
  font-size: 18px;
  line-height: 20px;
  text-align: center;
  color: #111;
`;

const Taskbar = styled.div`
  height: 13px;
  flex: none;
  display: flex;
  align-items: flex-start;
  overflow: hidden;
  background: linear-gradient(180deg, #2b72e8 0%, #2f6fe0 40%, #2560d8 100%);
`;

const StartButton = styled.div`
  width: 112px;
  height: 20px;
  margin-top: 5px;
  flex: none;
  padding: 1px 0 0 14px;
  border-radius: 0 6px 0 0;
  background: linear-gradient(180deg, #5aa65a 0%, #3e8e3e 100%);
`;

const StartFlag = styled.div`
  width: 10px;
  height: 10px;
  background: #e88a2a;
  border-radius: 3px;
`;

const QuickLaunch = styled.div`
  width: 166px;
  flex: none;
  display: flex;
  padding: 8px 0 0 22px;
  gap: 24px;
`;

const QuickIcon = styled.div`
  width: 12px;
  height: 12px;
  flex: none;
  border-radius: 3px;
  background: ${(p) => p.$c};
`;

const TaskButton = styled.div`
  width: 158px;
  height: 20px;
  margin: 7px 2px 0 0;
  flex: none;
  padding: 1px 0 0 8px;
  border-radius: 3px 3px 0 0;
  background: ${(p) => (p.$active ? '#1e50b4' : '#3f80ea')};
`;

const Tray = styled.div`
  width: 110px;
  height: 20px;
  margin: 4px 0 0 auto;
  flex: none;
  display: flex;
  align-items: flex-start;
  padding: 2px 0 0 11px;
  background: #1a96ea;
  border-left: 1px solid #0c5ac0;
`;

const Clock = styled.div`
  margin-left: 24px;
  font-size: 14px;
  line-height: 14px;
  color: #fff;
`;
